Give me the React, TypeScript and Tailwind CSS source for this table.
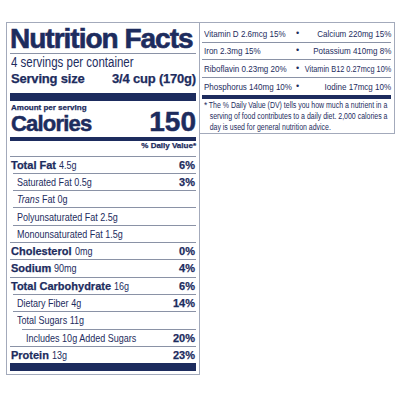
const base = "font-[family-name:Liberation_Sans,Arial,sans-serif]";
const heavy = "font-bold [-webkit-text-stroke:0.25px_#1d2c5e]";

// Liberation Sans squeezed to Arial Narrow width
function N({
  children,
  className = "origin-left [transform:scaleX(0.82)]",
}: {
  children: React.ReactNode;
  className?: string;
}) {
  return <span className={`inline-block whitespace-nowrap ${className}`}>{children}</span>;
}

type Row = {
  label: React.ReactNode;
  amount: string;
  dv?: string;
  level: 0 | 1 | 2;
  first?: boolean;
};

const rows: Row[] = [
  { label: "Total Fat", amount: "4.5g", dv: "6%", level: 0, first: true },
  { label: "Saturated Fat", amount: "0.5g", dv: "3%", level: 1 },
  {
    label: (
      <>
        <i>Trans</i> Fat
      </>
    ),
    amount: "0g",
    level: 1,
  },
  { label: "Polyunsaturated Fat", amount: "2.5g", level: 1 },
  { label: "Monounsaturated Fat", amount: "1.5g", level: 1 },
  { label: "Cholesterol", amount: "0mg", dv: "0%", level: 0 },
  { label: "Sodium", amount: "90mg", dv: "4%", level: 0 },
  { label: "Total Carbohydrate", amount: "16g", dv: "6%", level: 0 },
  { label: "Dietary Fiber", amount: "4g", dv: "14%", level: 1 },
  { label: "Total Sugars", amount: "11g", level: 1 },
  { label: "Includes 10g Added Sugars", amount: "", dv: "20%", level: 2 },
  { label: "Protein", amount: "13g", dv: "23%", level: 0 },
];

const vitamins = [
  ["Vitamin D 2.6mcg 15%", "Calcium 220mg 15%"],
  ["Iron 2.3mg 15%", "Potassium 410mg 8%"],
  ["Riboflavin 0.23mg 20%", "Vitamin B12 0.27mcg 10%"],
  ["Phosphorus 140mg 10%", "Iodine 17mcg 10%"],
];

function NutrientRow({ row }: { row: Row }) {
  const indent =
    row.level === 0 ? "ml-0 pl-px" : row.level === 1 ? "ml-[3px] pl-[4px]" : "ml-[12px] pl-[4px]";
  return (
    <div
      className={`flex items-center justify-between border-t border-[#8a92a6] pr-px ${indent} ${
        row.first ? "h-[16.7px]" : "h-[17.33px]"
      }`}
    >
      <span className="whitespace-nowrap text-[11px] leading-[12px]">
        {row.level === 0 ? (
          <>
            <span className={heavy}>{row.label}</span> <N>{row.amount}</N>
          </>
        ) : (
          <N>
            {row.label}
            {row.amount && ` ${row.amount}`}
          </N>
        )}
      </span>
      {row.dv && <span className={`${heavy} text-[11px] leading-[12px]`}>{row.dv}</span>}
    </div>
  );
}

export default function App() {
  return (
    <div className={`${base} h-[400px] w-[400px] bg-white pl-[6px] pt-[22px] text-[#1d2c5e]`}>
      <div className="flex items-start">
        {/* main label */}
        <section className="w-[194px] border border-[#a3aabb] pb-[3px] pl-[3px] pr-[3px]">
          <h1 className="border-b border-[#8a92a6] pt-[2px] text-[28px] font-bold leading-[28px] tracking-[-1px] [-webkit-text-stroke:0.6px_#1d2c5e]">
            Nutrition Facts
          </h1>
          <p className="pl-px text-[14px] leading-[16px]">
            <N>4 servings per container</N>
          </p>
          <div className={`${heavy} flex justify-between pl-px text-[13px] leading-[18px] tracking-[-0.2px]`}>
            <span>Serving size</span>
            <span>3/4 cup (170g)</span>
          </div>
          <div className="mt-[5px] h-[8px] bg-[#1d2c5e]" />
          <p className={`${heavy} mt-[2px] pl-px text-[8px] leading-[10px]`}>Amount per serving</p>
          <div className="flex h-[18px] items-baseline justify-between pl-px font-bold leading-[18px] [-webkit-text-stroke:0.5px_#1d2c5e]">
            <span className="text-[22px] tracking-[-0.8px]">Calories</span>
            <span className="text-[28px]">150</span>
          </div>
          <div className="mt-[6px] h-[4px] bg-[#1d2c5e]" />
          <p className={`${heavy} h-[15px] text-right text-[8px] leading-[10px]`}>% Daily Value*</p>
          {rows.map((row, i) => (
            <NutrientRow key={i} row={row} />
          ))}
          <div className="h-[8px] bg-[#1d2c5e]" />
        </section>

        {/* vitamins + footnote */}
        <section className="-ml-px w-[196px] border border-[#a3aabb] pl-[2px] pr-[3px] pt-[2px]">
          {vitamins.map(([left, right], i) => (
            <div
              key={i}
              className={`grid h-[17.5px] grid-cols-[91px_9px_minmax(0,1fr)] items-center text-[9.8px] leading-[11px] ${
                i < 3 ? "border-b border-[#8a92a6]" : ""
              }`}
            >
              <span className="pl-[2px]">
                <N>{left}</N>
              </span>
              <span className="text-center text-[9px]">•</span>
              <span className="flex min-w-0 justify-end">
                <N
                  className={
                    i === 2
                      ? "shrink-0 origin-right [transform:scaleX(0.75)]"
                      : "shrink-0 origin-right [transform:scaleX(0.82)]"
                  }
                >
                  {right}
                </N>
              </span>
            </div>
          ))}
          <div className="h-[4px] bg-[#1d2c5e]" />
          <div className="flex pb-px pl-[2px] pt-[1px] text-[8.5px] leading-[10.8px]">
            <span className="w-[4px] shrink-0">*</span>
            <N>
              <span className="pl-px">The % Daily Value (DV) tells you how much a nutrient in a</span>
              <br />
              <span className="pl-[2px]">serving of food contributes to a daily diet. 2,000 calories a</span>
              <br />
              <span className="pl-[2px]">day is used for general nutrition advice.</span>
            </N>
          </div>
        </section>
      </div>
    </div>
  );
}
